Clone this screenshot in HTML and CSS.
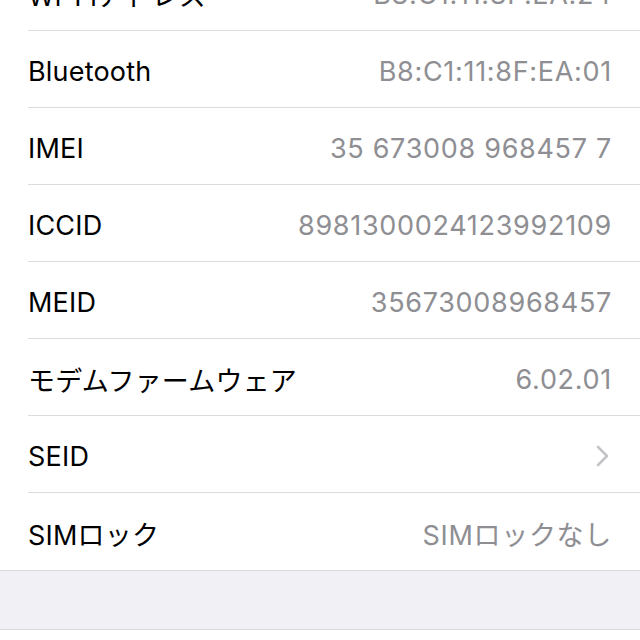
FILE: index.html
```html
<!DOCTYPE html>
<html lang="ja">
<head>
  <meta charset="UTF-8">
  <meta name="viewport" content="width=device-width, initial-scale=1.0">
  <title>情報</title>
  <link rel="stylesheet" href="styles.css">
</head>
<body>

<ul class="info-list">
  <li class="row"><span class="label">Wi-Fiアドレス</span><span class="value">B8:C1:11:8F:EA:24</span></li>
  <li class="row"><span class="label">Bluetooth</span><span class="value">B8:C1:11:8F:EA:01</span></li>
  <li class="row"><span class="label">IMEI</span><span class="value">35 673008 968457 7</span></li>
  <li class="row"><span class="label">ICCID</span><span class="value">8981300024123992109</span></li>
  <li class="row"><span class="label">MEID</span><span class="value">35673008968457</span></li>
  <li class="row"><span class="label">モデムファームウェア</span><span class="value">6.02.01</span></li>
  <li class="row">
    <span class="label">SEID</span>
    <svg class="chevron" width="14" height="22" viewBox="0 0 14 22"><path d="M2 2 L11 11 L2 20" fill="none" stroke="#c4c4c8" stroke-width="2.6" stroke-linecap="round" stroke-linejoin="round"/></svg>
  </li>
  <li class="row last"><span class="label">SIMロック</span><span class="value">SIMロックなし</span></li>
</ul>

<div class="group-gap"></div>
<div class="after"></div>

</body>
</html>
```

FILE: styles.css
```css
* { box-sizing: border-box; margin: 0; padding: 0; }
body {
  font-family: Inter, "Noto Sans CJK JP", sans-serif;
  background: #fff;
  color: #000;
  width: 640px;
  height: 640px;
  overflow: hidden;
}
.info-list {
  list-style: none;
  margin-top: -46px;
  padding-left: 28px;
  border-bottom: 1px solid #d8d8dc;
}
.row {
  height: 77px;
  display: flex;
  justify-content: space-between;
  align-items: center;
  padding-top: 4px;
  padding-right: 29px;
  border-bottom: 1px solid #dcdce0;
  font-size: 27px;
}
.row.last { border-bottom: none; }
.label { color: #000; letter-spacing: 0.2px; }
.value {
  color: #8e8e93;
  letter-spacing: 0.7px;
  margin-right: -1px;
}
.chevron { margin-right: 1px; }

.group-gap {
  height: 59px;
  background: #f0f0f5;
  border-bottom: 1px solid #d8d8dc;
}
.after { height: 20px; background: #fff; }
```
